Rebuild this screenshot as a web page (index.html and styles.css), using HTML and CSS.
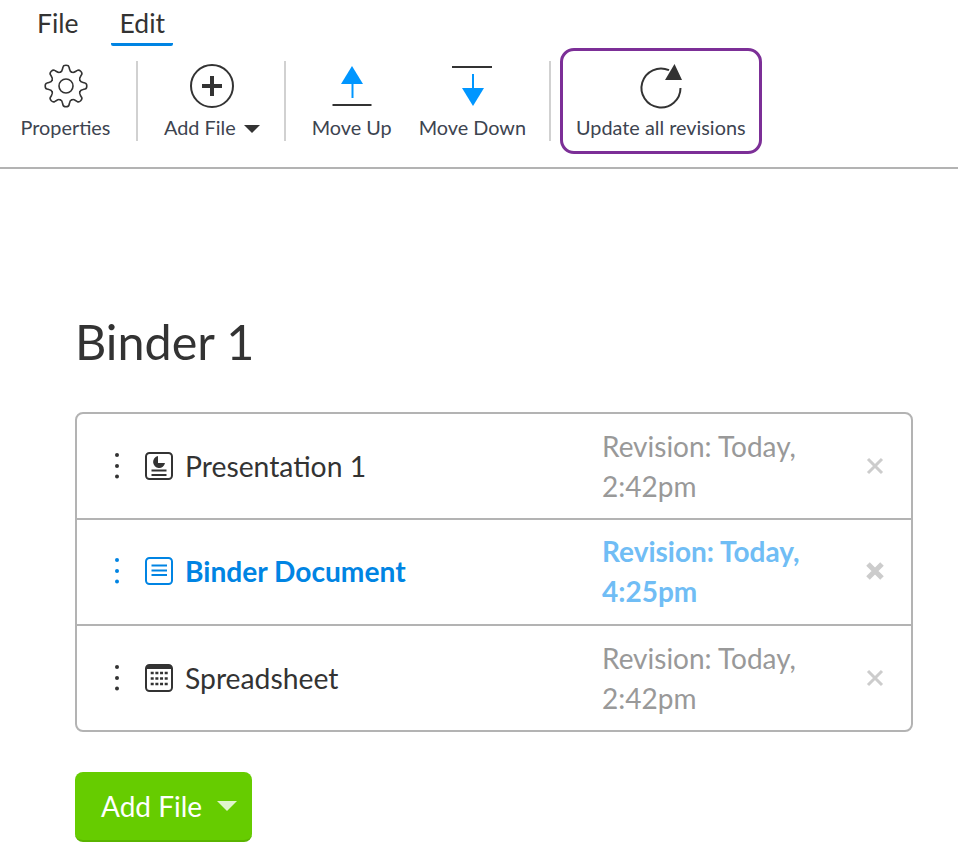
FILE: index.html
```html
<!DOCTYPE html>
<html lang="en">
<head>
<meta charset="utf-8">
<title>Binder 1</title>
<link rel="stylesheet" href="styles.css">
</head>
<body>
<header class="topbar">
  <nav class="menu">
    <a class="menu-item">File</a>
    <a class="menu-item menu-item-active">Edit</a>
  </nav>
  <div class="tools">
    <div class="tool tool-properties">
      <svg class="tool-icon" viewBox="0 0 48 48" width="48" height="48">
        <defs>
          <path id="tooth" d="M18.26 10.14Q20 9.6 20.5 7L21 5Q21.3 3.2 24 3.2Q26.7 3.2 27 5L27.5 7Q28 9.6 29.74 10.14"/>
        </defs>
        <g class="line-thin">
          <use href="#tooth"/>
          <use href="#tooth" transform="rotate(45 24 24)"/>
          <use href="#tooth" transform="rotate(90 24 24)"/>
          <use href="#tooth" transform="rotate(135 24 24)"/>
          <use href="#tooth" transform="rotate(180 24 24)"/>
          <use href="#tooth" transform="rotate(225 24 24)"/>
          <use href="#tooth" transform="rotate(270 24 24)"/>
          <use href="#tooth" transform="rotate(315 24 24)"/>
          <circle cx="24" cy="24" r="7"/>
        </g>
      </svg>
      <span class="tool-label">Properties</span>
    </div>
    <div class="sep"></div>
    <div class="tool">
      <svg class="tool-icon" viewBox="0 0 48 48" width="48" height="48">
        <circle class="line" cx="24" cy="24" r="21"/>
        <path class="line-bold" d="M14 24H34M24 14V34"/>
      </svg>
      <span class="tool-label">Add File<span class="caret"></span></span>
    </div>
    <div class="sep"></div>
    <div class="tool">
      <svg class="tool-icon" viewBox="0 0 48 48" width="48" height="48">
        <path class="arrow-fill" d="M24 4L35 22H13Z"/>
        <path class="arrow-line" d="M24.5 20V36"/>
        <path class="line" d="M4.5 43H43.5"/>
      </svg>
      <span class="tool-label">Move Up</span>
    </div>
    <div class="tool tool-down">
      <svg class="tool-icon" viewBox="0 0 48 48" width="48" height="48">
        <path class="line" d="M4 5H44"/>
        <path class="arrow-line" d="M25 12V30"/>
        <path class="arrow-fill" d="M25 44L14 26H36Z"/>
      </svg>
      <span class="tool-label">Move Down</span>
    </div>
    <div class="sep sep-last"></div>
    <div class="tool tool-highlight">
      <svg class="tool-icon" viewBox="0 0 48 48" width="48" height="48">
        <path class="line" d="M43.5 26A19.5 19.5 0 1 1 32 8.2"/>
        <path class="solid" d="M37.5 2L45 18H28Z"/>
      </svg>
      <span class="tool-label">Update all revisions</span>
    </div>
  </div>
</header>

<main class="content">
  <h1 class="title">Binder 1</h1>
  <ul class="files">
    <li class="file">
      <svg class="dots" viewBox="0 0 20 28" width="20" height="28"><circle cx="10" cy="3" r="2"/><circle cx="10" cy="14" r="2"/><circle cx="10" cy="24.500" r="2"/></svg>
      <svg class="file-icon" viewBox="0 0 28 28" width="28" height="28">
        <rect class="line" x="1" y="1" width="26" height="26" rx="3.500"/>
        <path class="solid" d="M13 4A6 6 0 1 0 20 11H13Z"/>
        <path class="line" d="M6.500 18.500H21.500M6.500 23H21.500"/>
      </svg>
      <span class="file-name">Presentation 1</span>
      <span class="file-rev">Revision: Today, 2:42pm</span>
      <svg class="remove" viewBox="0 0 18 18" width="18" height="18"><path d="M2 2L16 16M16 2L2 16"/></svg>
    </li>
    <li class="file file-active">
      <svg class="dots" viewBox="0 0 20 28" width="20" height="28"><circle cx="10" cy="3" r="2"/><circle cx="10" cy="14" r="2"/><circle cx="10" cy="24.500" r="2"/></svg>
      <svg class="file-icon" viewBox="0 0 28 28" width="28" height="28">
        <rect class="line" x="1" y="1" width="26" height="26" rx="3.500"/>
        <path class="line" d="M6.500 8.500H22M6.500 13.500H22M6.500 18H22"/>
      </svg>
      <span class="file-name">Binder Document</span>
      <span class="file-rev">Revision: Today, 4:25pm</span>
      <svg class="remove" viewBox="0 0 18 18" width="18" height="18"><path d="M2 2L16 16M16 2L2 16"/></svg>
    </li>
    <li class="file">
      <svg class="dots" viewBox="0 0 20 28" width="20" height="28"><circle cx="10" cy="3" r="2"/><circle cx="10" cy="14" r="2"/><circle cx="10" cy="24.500" r="2"/></svg>
      <svg class="file-icon" viewBox="0 0 28 28" width="28" height="28">
        <rect class="line" x="1" y="1" width="26" height="26" rx="3.500"/>
        <path class="solid" d="M2 1H26V5H2Z"/>
        <path class="cells" d="M5.700 9H23M5.700 14.500H23M5.700 20H23"/>
      </svg>
      <span class="file-name">Spreadsheet</span>
      <span class="file-rev">Revision: Today, 2:42pm</span>
      <svg class="remove" viewBox="0 0 18 18" width="18" height="18"><path d="M2 2L16 16M16 2L2 16"/></svg>
    </li>
  </ul>
  <button class="add-btn" type="button">Add File<span class="add-caret"></span></button>
</main>
</body>
</html>
```
FILE: styles.css
```css
* { box-sizing: border-box; }

body {
  margin: 0;
  background: #fff;
  color: #333;
  font-family: Lato, "Open Sans", sans-serif;
}

.topbar {
  height: 169px;
  border-bottom: 2px solid #b3b3b3;
}

.menu {
  display: flex;
  gap: 23px;
  height: 48px;
  padding-left: 28px;
}

.menu-item {
  height: 46px;
  padding: 5px 9px 0;
  font-size: 26.500px;
  line-height: 36px;
}

.menu-item-active {
  padding-right: 8px;
  border-bottom: 3px solid #0084e3;
  border-radius: 2px;
}

.tools {
  display: flex;
  align-items: flex-start;
  padding-left: 19px;
}

.tool {
  display: flex;
  flex-direction: column;
  align-items: center;
  padding-top: 14px;
}

.tool-properties { width: 93px; }

.tool-down { margin-left: 27px; }

.tool-icon { display: block; }

.tool-label {
  display: block;
  font-size: 19.850px;
  line-height: 35px;
  color: #3d4450;
  white-space: nowrap;
}

.tool-highlight {
  height: 106px;
  margin-left: 9px;
  padding: 11px 13px 0;
  border: 3px solid #7c2f97;
  border-radius: 14px;
}

.sep {
  width: 2px;
  height: 80px;
  margin: 13px 26px 0 24px;
  background: #d1d1d1;
}

.sep-last { margin-right: 0; margin-left: 23px; }

.caret {
  display: inline-block;
  margin-left: 8px;
  vertical-align: 2px;
  border-top: 8px solid #333;
  border-left: 8px solid transparent;
  border-right: 8px solid transparent;
}

.line, .line-thin, .line-bold, .arrow-line {
  fill: none;
  stroke: #333;
  stroke-width: 2;
}

.line-thin { stroke-width: 1.600; stroke-linecap: round; }
.line-bold { stroke-width: 4; }
.arrow-line { stroke: #0096ff; }
.arrow-fill { fill: #0096ff; }
.solid { fill: #333; }

.cells {
  fill: none;
  stroke: #333;
  stroke-width: 2.700;
  stroke-dasharray: 3 1.670;
}

.content {
  padding: 0 45px 0 75px;
}

.title {
  margin: 0;
  padding-top: 140px;
  height: 243px;
  font-size: 48.500px;
  font-weight: 400;
  line-height: 64px;
}

.files {
  margin: 0;
  padding: 0;
  list-style: none;
  border: 2px solid #b3b3b3;
  border-radius: 8px;
}

.file {
  display: flex;
  align-items: center;
  height: 106px;
  padding: 0 27px 0 30px;
  border-bottom: 2px solid #b3b3b3;
}

.file:last-child {
  height: 104px;
  border-bottom: 0;
}

.dots { flex: none; margin-right: 18px; fill: #333; }
.file-icon { flex: none; margin-right: 12px; }

.file-name {
  flex: 1;
  font-size: 28.300px;
  line-height: 40px;
}

.file-rev {
  flex: none;
  width: 220px;
  font-size: 28px;
  line-height: 40px;
  color: #999;
}

.remove {
  flex: none;
  margin-left: 44px;
  fill: none;
  stroke: #ccc;
  stroke-width: 3;
}

.file-active { padding-bottom: 2px; }
.file-active .file-name { color: #0084e3; font-size: 28.150px; font-weight: 700; }
.file-active .file-rev { color: #70bdf5; font-weight: 700; }
.file-active .dots { fill: #0084e3; }
.file-active .line { stroke: #0084e3; }
.file-active .remove { stroke-width: 5; }

.add-btn {
  display: flex;
  align-items: center;
  height: 70px;
  margin-top: 40px;
  padding: 0 15px 0 26px;
  border: 0;
  border-bottom: 2px solid #5ab400;
  border-radius: 8px;
  background: #66cc00;
  color: #fff;
  font-family: inherit;
  font-size: 28px;
}

.add-caret {
  margin-left: 15px;
  border-top: 10px solid #e0f5cc;
  border-left: 10px solid transparent;
  border-right: 10px solid transparent;
}
```
